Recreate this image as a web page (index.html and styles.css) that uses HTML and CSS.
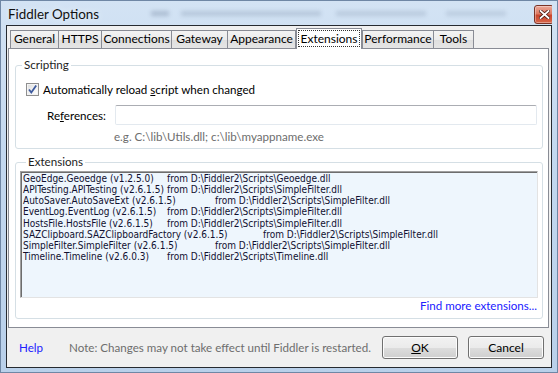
FILE: index.html
```html
<!DOCTYPE html>
<html lang="en">
<head>
    <meta charset="UTF-8">
    <title>Fiddler Options</title>
    <link rel="stylesheet" href="styles.css">
</head>
<body>
    <div class="window">
        <div class="titlebar">
            <span class="title">Fiddler Options</span>
            <div class="smudge s1"></div>
            <div class="smudge s2"></div>
            <div class="smudge s3"></div>
            <div class="smudge s4"></div>
            <div class="close">
                <svg width="11" height="9" viewBox="0 0 11 9">
                    <path d="M1.5 1 L9.5 8 M9.5 1 L1.5 8" stroke="#4a1a12" stroke-width="3.4" stroke-linecap="square"/>
                    <path d="M1.5 1 L9.5 8 M9.5 1 L1.5 8" stroke="#ffffff" stroke-width="1.8" stroke-linecap="square"/>
                </svg>
            </div>
        </div>

        <div class="client">
            <div class="tabs">
                <div class="tab t-general">General</div>
                <div class="tab t-https">HTTPS</div>
                <div class="tab t-connections">Connections</div>
                <div class="tab t-gateway">Gateway</div>
                <div class="tab t-appearance">Appearance</div>
                <div class="tab tab-active t-extensions"><span class="focus">Extensions</span></div>
                <div class="tab t-performance">Performance</div>
                <div class="tab t-tools">Tools</div>
            </div>

            <div class="panel">
                <fieldset class="group scripting">
                    <legend>Scripting</legend>
                    <div class="check-row">
                        <span class="checkbox">
                            <svg width="11" height="11" viewBox="0 0 11 11">
                                <path d="M2 5.5 L4.3 8.5 L9.2 1.5" fill="none" stroke="#3d5a9e" stroke-width="1.8"/>
                            </svg>
                        </span>
                        <span>Automatically reload <u>s</u>cript when changed</span>
                    </div>
                    <div class="ref-row">
                        <span class="ref-label">Re<u>f</u>erences:</span>
                        <div class="textbox"></div>
                    </div>
                    <div class="hint">e.g. C:\lib\Utils.dll; c:\lib\myappname.exe</div>
                </fieldset>

                <fieldset class="group extensions">
                    <legend>Extensions</legend>
                    <div class="listbox">
                        <div class="row"><span class="name w1">GeoEdge.Geoedge (v1.2.5.0)</span>from D:\Fiddler2\Scripts\Geoedge.dll</div>
                        <div class="row"><span class="name w1">APITesting.APITesting (v2.6.1.5)</span>from D:\Fiddler2\Scripts\SimpleFilter.dll</div>
                        <div class="row"><span class="name w2">AutoSaver.AutoSaveExt (v2.6.1.5)</span>from D:\Fiddler2\Scripts\SimpleFilter.dll</div>
                        <div class="row"><span class="name w1">EventLog.EventLog (v2.6.1.5)</span>from D:\Fiddler2\Scripts\SimpleFilter.dll</div>
                        <div class="row"><span class="name w1">HostsFile.HostsFile (v2.6.1.5)</span>from D:\Fiddler2\Scripts\SimpleFilter.dll</div>
                        <div class="row"><span class="name w3">SAZClipboard.SAZClipboardFactory (v2.6.1.5)</span>from D:\Fiddler2\Scripts\SimpleFilter.dll</div>
                        <div class="row"><span class="name w2">SimpleFilter.SimpleFilter (v2.6.1.5)</span>from D:\Fiddler2\Scripts\SimpleFilter.dll</div>
                        <div class="row"><span class="name w1">Timeline.Timeline (v2.6.0.3)</span>from D:\Fiddler2\Scripts\Timeline.dll</div>
                    </div>
                    <div class="more"><a href="#">Find more extensions...</a></div>
                </fieldset>
            </div>

            <div class="footer">
                <a href="#" class="help">Help</a>
                <span class="note">Note: Changes may not take effect until Fiddler is restarted.</span>
                <button class="btn btn-ok"><u>O</u>K</button>
                <button class="btn">Cancel</button>
            </div>
        </div>
    </div>
</body>
</html>
```

FILE: styles.css
```css
*{
    margin: 0;
    padding: 0;
    box-sizing: border-box;
}
body{
    width: 558px;
    height: 373px;
    overflow: hidden;
    font-family: Lato, "Liberation Sans", sans-serif;
    font-size: 11.6px;
    color: #000;
}
.window{
    width: 558px;
    height: 373px;
    border: 1px solid #6f87a5;
    padding: 0 5px 4px 5px;
    background: linear-gradient(180deg, #d3e3f4 0%, #c3d8ef 40%, #b9d0ea 100%);
    display: flex;
    flex-direction: column;
}
.titlebar{
    height: 24px;
    display: flex;
    align-items: center;
    position: relative;
    overflow: hidden;
}
.title{
    font-size: 13.4px;
    margin-left: 2px;
    margin-top: 1px;
    color: #111;
    text-shadow: 0 0 6px #eef5fc;
    position: relative;
    z-index: 1;
}
.smudge{
    position: absolute;
    height: 5px;
    background: #7b8ea6;
    filter: blur(2px);
    opacity: .45;
    top: 10px;
}
.s1{ left: 145px; width: 18px; }
.s2{ left: 175px; width: 140px; opacity: .32; }
.s3{ left: 330px; width: 90px; opacity: .28; }
.s4{ left: 440px; width: 60px; opacity: .25; }
.close{
    margin-left: auto;
    margin-right: -2px;
    margin-top: 3px;
    width: 20px;
    height: 19px;
    border: 1px solid #7a3326;
    border-radius: 3px;
    background: linear-gradient(180deg, #eca898 0%, #dc7a63 45%, #c9452c 55%, #d8664a 100%);
    box-shadow: inset 0 0 0 1px rgba(255,255,255,.35);
    display: flex;
    align-items: center;
    justify-content: center;
    position: relative;
    z-index: 1;
}

/* client area */
.client{
    flex: 1;
    border: 1px solid #262a30;
    background: #f0f0f0;
    display: flex;
    flex-direction: column;
}
.tabs{
    height: 22px;
    padding-left: 3px;
    display: flex;
    align-items: flex-end;
    position: relative;
    z-index: 1;
    font-size: 12px;
}
.tab{
    height: 18px;
    border: 1px solid #898c95;
    border-bottom: none;
    margin-right: -1px;
    background: linear-gradient(180deg, #f3f3f3 0%, #ebebeb 50%, #dedede 51%, #e5e5e5 100%);
    text-align: center;
    line-height: 16px;
}
.tab-active{
    height: 21px;
    margin-bottom: -1px;
    margin-left: 1px;
    margin-right: 0;
    background: #fff;
    line-height: 17px;
    padding-top: 1px;
}
.focus{
    border: 1px dotted #333;
    padding: 0 2px;
    line-height: 15px;
    display: inline-block;
}
.t-general{ width: 49px; }
.t-https{ width: 44px; }
.t-connections{ width: 71px; }
.t-gateway{ width: 57px; }
.t-appearance{ width: 69px; }
.t-extensions{ width: 66px; }
.t-performance{ width: 72px; }
.t-tools{ width: 41px; }

.panel{
    height: 280px;
    margin: 0 2px 0 1px;
    border: 1px solid #898c95;
    background: #fff;
    padding: 0 5px 0 6px;
}
.group{
    border: 1px solid #d5dfe5;
    border-radius: 3px;
    padding: 0;
}
.group legend{
    margin-left: 6px;
    padding: 0 2px;
    line-height: 14px;
    color: #1e1e1e;
}
.scripting{
    margin-top: 9px;
    padding: 9px 0 4px 0;
}
.check-row{
    height: 16px;
    display: flex;
    align-items: center;
    margin-left: 10px;
}
.checkbox{
    width: 13px;
    height: 13px;
    border: 1px solid #8f8f8f;
    background: linear-gradient(135deg, #dcdcdc 0%, #f4f4f4 60%, #fff 100%);
    box-shadow: inset 0 0 0 1px #f4f4f4;
    margin-right: 4px;
    display: flex;
    align-items: center;
    justify-content: center;
}
.ref-row{
    margin-top: 8px;
    display: flex;
    align-items: center;
}
.ref-label{
    width: 99px;
    padding-left: 31px;
}
.textbox{
    flex: 1;
    height: 20px;
    margin-right: 5px;
    border: 1px solid #e3e9ef;
    border-top-color: #abadb3;
    border-radius: 2px;
    background: #fff;
}
.hint{
    margin-top: 5px;
    margin-left: 98px;
    line-height: 14px;
    color: #6d6d6d;
}
.extensions{
    margin-top: 6px;
    padding: 2px 4px 5px 4px;
}
.listbox{
    height: 127px;
    border: 1px solid;
    border-color: #a0a0a0 #e3e3e3 #e3e3e3 #a0a0a0;
    box-shadow: inset 1px 1px 0 #6d6d6d;
    background: #eef6fd;
    padding: 1px 0 0 2px;
    font-family: "DejaVu Sans Condensed", "Liberation Sans", sans-serif;
    font-size: 10px;
    color: #101030;
}
.row{
    line-height: 11.15px;
    white-space: nowrap;
}
.name{
    display: inline-block;
}
.w1{ width: 144px; }
.w2{ width: 192px; }
.w3{ width: 240px; }
.more{
    margin-top: 1px;
    padding-right: 1px;
    text-align: right;
    line-height: 14px;
}
a{
    color: #2020ff;
    text-decoration: none;
}

/* bottom bar */
.footer{
    flex: 1;
    display: flex;
    align-items: center;
    padding: 0 7px 0 12px;
}
.help{
    width: 50px;
}
.note{
    color: #6d6d6d;
}
.btn{
    width: 76px;
    height: 23px;
    border: 1px solid #707070;
    border-radius: 3px;
    background: linear-gradient(180deg, #f2f2f2 0%, #ebebeb 50%, #dddddd 51%, #cfcfcf 100%);
    box-shadow: inset 0 0 0 1px #fcfcfc;
    font-family: inherit;
    font-size: 12px;
    color: #000;
}
.btn-ok{
    margin-left: auto;
    margin-right: 10px;
}
```
